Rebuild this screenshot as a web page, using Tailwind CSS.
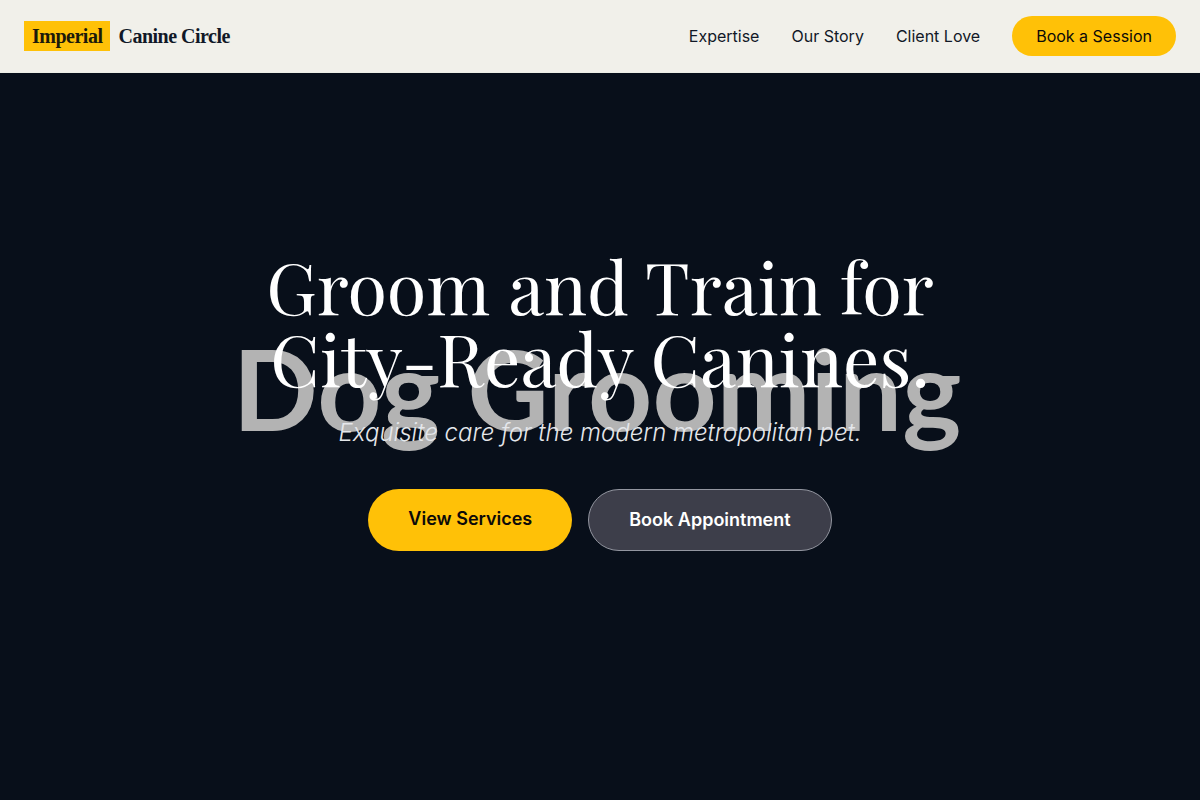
<!DOCTYPE html>
<html lang="en">
<head>
  <meta charset="UTF-8">
  <meta name="viewport" content="width=device-width, initial-scale=1.0">
  <title>Imperial Canine Circle</title>
  <script src="https://cdn.jsdelivr.net/npm/@tailwindcss/browser@4"></script>
</head>
<body class="bg-[#080f1a] font-['Inter',sans-serif] text-[#111827]">
  <!-- Navigation -->
  <header class="fixed inset-x-0 top-0 z-20 flex items-center justify-between border-b border-[#eceee6] bg-[#f1f0ea] px-6 py-4">
    <a href="#" class="flex items-center gap-2 font-['Liberation_Serif',serif] text-xl font-bold tracking-tight">
      <span class="bg-[#ffc107] px-2 py-px text-[#1c1a0a]">Imperial</span>
      <span>Canine Circle</span>
    </a>
    <nav class="flex items-center gap-8">
      <a href="#expertise">Expertise</a>
      <a href="#story">Our Story</a>
      <a href="#love">Client Love</a>
      <a href="#book" class="rounded-full bg-[#ffc107] px-6 py-2 text-[#0c0a09]">Book a Session</a>
    </nav>
  </header>

  <!-- Hero -->
  <section class="relative flex min-h-screen items-center justify-center overflow-hidden">
    <!-- Backdrop art -->
    <svg class="absolute inset-0 h-full w-full" viewBox="0 0 1200 800" preserveAspectRatio="xMidYMid slice" aria-hidden="true">
      <text x="597" y="431" text-anchor="middle" class="fill-[#b3b3b3] font-['Lato',sans-serif] text-[112px] font-bold">Dog Grooming</text>
    </svg>
    <div class="relative max-w-4xl px-6 text-center">
      <h1 class="mb-6 font-['Playfair_Display','Liberation_Serif',serif] text-7xl leading-none text-white">Groom and Train for<br>City-Ready Canines.</h1>
      <p class="mb-10 text-2xl font-light italic text-gray-200">Exquisite care for the modern metropolitan pet.</p>
      <div class="flex justify-center gap-4">
        <a href="#services" class="rounded-full bg-[#ffc107] px-10 py-4 text-lg font-semibold text-[#0c0a09]">View Services</a>
        <a href="#book" class="rounded-full border border-[#9396a0] bg-[#3d3e4a] px-10 py-4 text-lg font-semibold text-white">Book Appointment</a>
      </div>
    </div>
  </section>
</body>
</html>
